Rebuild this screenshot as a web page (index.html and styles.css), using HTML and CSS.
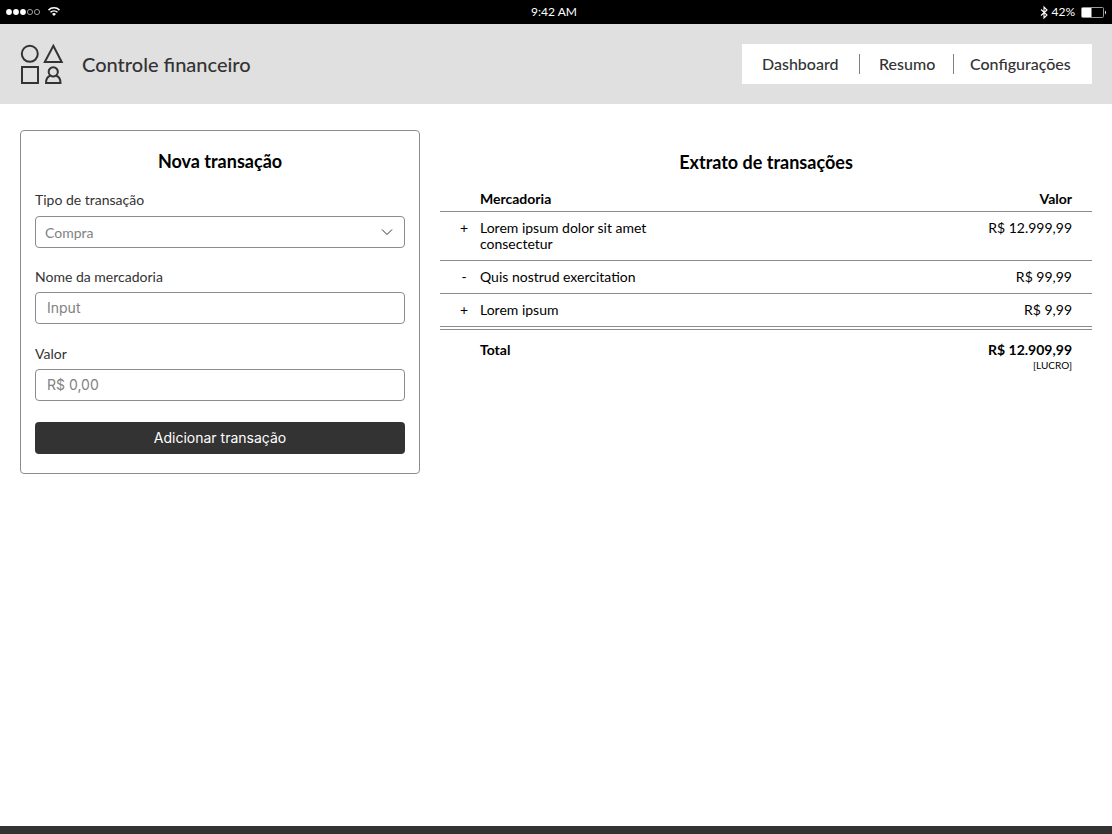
FILE: index.html
```html
<!DOCTYPE html>
<html lang="pt-BR">
<head>
<meta charset="utf-8">
<title>Controle financeiro</title>
<link rel="stylesheet" href="styles.css">
</head>
<body>
<div class="status">
  <div class="status-side">
    <svg width="34" height="8" viewBox="0 0 34 8"><g fill="#fff"><circle cx="3" cy="4" r="2.900"/><circle cx="10" cy="4" r="2.900"/><circle cx="17" cy="4" r="2.900"/></g><g fill="none" stroke="#fff" stroke-width=".6"><circle cx="24" cy="4" r="2.600"/><circle cx="31" cy="4" r="2.600"/></g></svg>
    <svg class="wifi" width="12" height="9" viewBox="0 0 12 9" fill="none" stroke="#fff" stroke-width="1.500"><path d="M.5 3.100C3.500.1 8.500.1 11.500 3.100"/><path d="M2.500 5.300C4.500 3.400 7.500 3.400 9.500 5.300"/><path d="M6 8.900L4 6.900C5.100 5.800 6.900 5.800 8 6.900Z" fill="#fff" stroke="none"/></svg>
  </div>
  <span class="clock">9:42 AM</span>
  <div class="status-side status-right">
    <svg width="8" height="13" viewBox="0 0 8 13" fill="none" stroke="#fff" stroke-width="1.100"><path d="M1 3.500L7 9L4 12V1L7 4L1 9.500"/></svg>
    <span class="percent">42%</span>
    <svg class="battery" width="26" height="11" viewBox="0 0 26 11"><rect x=".5" y=".5" width="22" height="10" rx="1" fill="none" stroke="#999"/><rect x="1" y="1" width="9.500" height="9" fill="#fff"/><path d="M24 3.500q2 2 0 4z" fill="#fff"/></svg>
  </div>
</div>
<header class="header">
  <svg class="logo" width="44" height="42" viewBox="0 0 44 42" fill="none" stroke="#333" stroke-width="2"><circle cx="9.800" cy="10.800" r="8"/><path d="M33.300 2.800L41.700 19H24.800Z"/><rect x="2" y="24" width="16" height="16"/><path d="M30.500 32.500A4.600 4.600 0 1 1 36 32.500C38.800 33.500 40.500 36 40.500 40H26C26 36 27.700 33.500 30.500 32.500C32.300 33.800 34.200 33.800 36 32.500"/></svg>
  <span class="brand">Controle financeiro</span>
  <nav class="nav"><a>Dashboard</a><a>Resumo</a><a>Configurações</a></nav>
</header>
<main class="main">
  <form class="card">
    <h2 class="title">Nova transação</h2>
    <div class="field"><label class="label">Tipo de transação</label>
      <div class="control select"><span>Compra</span><svg width="12" height="8" viewBox="0 0 12 8" fill="none" stroke="#333" stroke-width="1"><path d="M1 1.500L6 6.500L11 1.500"/></svg></div></div>
    <div class="field"><label class="label">Nome da mercadoria</label><div class="control">Input</div></div>
    <div class="field"><label class="label">Valor</label><div class="control">R$ 0,00</div></div>
    <div class="button">Adicionar transação</div>
  </form>
  <section class="statement">
    <h2 class="title">Extrato de transações</h2>
    <div class="row head"><span></span><span>Mercadoria</span><span class="value">Valor</span></div>
    <div class="row"><span class="sign">+</span><span>Lorem ipsum dolor sit amet consectetur</span><span class="value">R$ 12.999,99</span></div>
    <div class="row"><span class="sign">-</span><span>Quis nostrud exercitation</span><span class="value">R$ 99,99</span></div>
    <div class="row last"><span class="sign">+</span><span>Lorem ipsum</span><span class="value">R$ 9,99</span></div>
    <div class="row total"><span></span><span>Total</span><span class="value">R$ 12.909,99<small class="note">[LUCRO]</small></span></div>
  </section>
</main>
<footer class="footer"></footer>
</body>
</html>
```
FILE: styles.css
```css
* { box-sizing: border-box; }
body {
  margin: 0;
  height: 834px;
  display: flex;
  flex-direction: column;
  overflow: hidden;
  background: #fff;
  color: #000;
  font: 14px/16px Lato, sans-serif;
}
svg { display: block; flex: none; }
.status {
  height: 24px;
  background: #000;
  color: #fff;
  display: flex;
  align-items: center;
  font-size: 12px;
  padding: 0 6px;
}
.status-side { flex: 1; display: flex; align-items: center; }
.status-right { justify-content: flex-end; }
.clock { margin: 0 2px 0 -2px; }
.wifi { margin: 0 0 1px 8px; }
.percent { margin: 0 6px 0 3px; }
.battery { margin-right: -1px; }
.header {
  height: 80px;
  background: #e0e0e0;
  color: #333;
  display: flex;
  align-items: center;
  padding: 0 20px;
}
.brand { margin-left: 18px; font-size: 20px; line-height: 24px; font-weight: 500; letter-spacing: 0; }
.nav {
  margin-left: auto;
  width: 350px;
  height: 40px;
  background: #fff;
  display: flex;
  align-items: center;
  font-size: 16px;
  font-weight: 500;
  line-height: 20px;
  padding-left: 20px;
}
.nav a + a { border-left: 1px solid #828282; }
.nav a:nth-child(1) { width: 97px; }
.nav a:nth-child(2) { width: 94px; padding-left: 19px; }
.nav a:nth-child(3) { padding-left: 16px; }
.main { flex: 1; display: flex; align-items: flex-start; gap: 20px; padding: 26px 20px 0; }
.card {
  width: 400px;
  height: 344px;
  border: 1px solid #8c8c8c;
  border-radius: 4px;
  padding: 19px 14px 0;
}
.title { margin: 0; text-align: center; font-size: 18px; line-height: 22px; font-weight: 700; }
.card .title { margin-bottom: 19px; }
.field { margin-bottom: 20px; }
.label { display: block; color: #333; line-height: 17px; margin-bottom: 8px; }
.field:nth-of-type(2) .label { margin-bottom: 7px; }
.field:nth-of-type(3) { margin-bottom: 21px; }
.field:nth-of-type(3) .label { padding-top: 1px; line-height: 17px; margin-bottom: 7px; }
.control {
  height: 32px;
  border: 1px solid #8c8c8c;
  border-radius: 4px;
  padding: 0 11px;
  color: #828282;
  font: 400 14px/30px Inter, sans-serif;
}
.select {
  display: flex;
  align-items: center;
  justify-content: space-between;
  padding-left: 9px;
  font: 14px/32px Lato, sans-serif;
}
.select span { padding-top: 1px; }
.button {
  height: 32px;
  border-radius: 4px;
  background: #333;
  color: #fff;
  text-align: center;
  font: 14px/32px Inter, sans-serif;
}
.statement { flex: 1; padding-top: 21px; }
.row {
  display: grid;
  grid-template-columns: 40px 190px 1fr;
  border-bottom: 1px solid #8c8c8c;
  padding: 8px 20px 8px 0;
}
.head { font-weight: 700; padding: 18px 20px 4px 0; }
.sign { padding-left: 8px; text-align: center; }
.value { text-align: right; }
.last { border-bottom: 4px double #8c8c8c; }
.total { border: 0; font-weight: 700; padding-top: 12px; }
.note { display: block; font-size: 10px; line-height: 14px; font-weight: 400; }
.footer { height: 8px; background: #333; }
```
